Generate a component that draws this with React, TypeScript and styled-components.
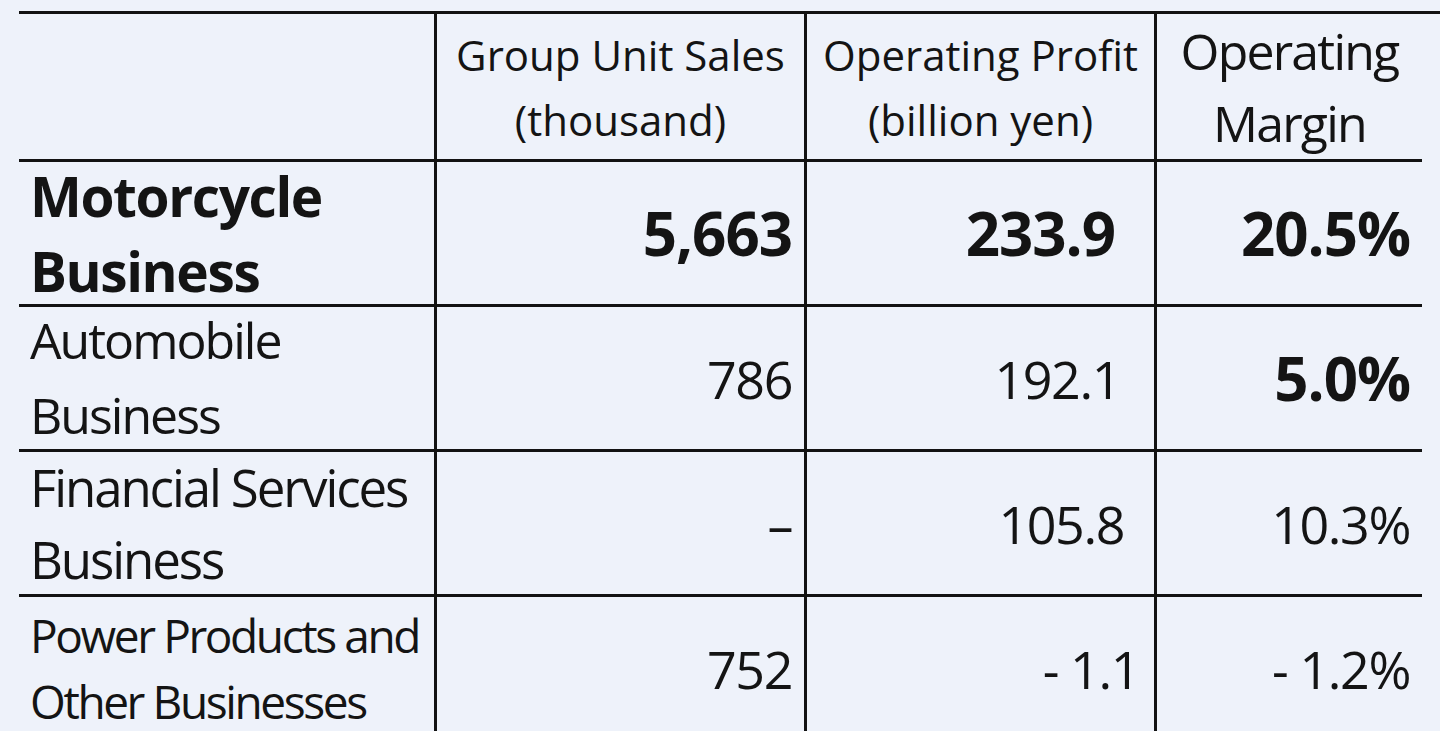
import React from "react";
import styled, { createGlobalStyle } from "styled-components";

const GlobalStyle = createGlobalStyle`
  html, body {
    margin: 0;
    padding: 0;
    background: #eef2fa;
  }
  body {
    font-family: "Open Sans", "Liberation Sans", sans-serif;
    color: #141414;
    overflow: hidden;
  }
`;

const Page = styled.div`
  width: 1440px;
  height: 731px;
  padding: 11px 0 0 19px;
  box-sizing: border-box;
  background: #eef2fa;
`;

const Table = styled.div`
  display: grid;
  grid-template-columns: 415px 370px 350px 268px;
  border-top: 3px solid #121212;
`;

const Row = styled.div<{ $h: number }>`
  display: contents;
  & > * {
    height: ${(p) => p.$h}px;
    border-bottom: 3px solid #121212;
  }
`;

const Cell = styled.div<{ $first?: boolean }>`
  display: flex;
  align-items: center;
  box-sizing: content-box;
  border-left: ${(p) => (p.$first ? "none" : "3px solid #121212")};
`;

const HeadCell = styled(Cell)`
  justify-content: center;
  text-align: center;
`;

const HeadText = styled.div<{ $size: number; $lh: number; $ls?: number }>`
  font-size: ${(p) => p.$size}px;
  line-height: ${(p) => p.$lh}px;
  letter-spacing: ${(p) => p.$ls ?? 0}px;
  white-space: nowrap;
`;

const Label = styled.div<{ $bold?: boolean; $lh: number; $size: number; $ls: number }>`
  padding-left: 11px;
  font-size: ${(p) => p.$size}px;
  font-weight: ${(p) => (p.$bold ? 700 : 400)};
  line-height: ${(p) => p.$lh}px;
  letter-spacing: ${(p) => p.$ls}px;
  white-space: nowrap;
`;

const ValueCell = styled(Cell)<{ $pad: number }>`
  justify-content: flex-end;
  padding-right: ${(p) => p.$pad}px;
`;

const Value = styled.span<{ $bold?: boolean }>`
  font-size: ${(p) => (p.$bold ? 60 : 52)}px;
  font-weight: ${(p) => (p.$bold ? 700 : 400)};
  letter-spacing: ${(p) => (p.$bold ? -1 : -1.4)}px;
  white-space: pre;
`;

type Line = {
  label: string[];
  bold?: boolean;
  size: number;
  ls: number;
  lh: number;
  values: { text: string; bold?: boolean; pad: number }[];
};

const rows: Line[] = [
  {
    label: ["Motorcycle", "Business"],
    bold: true,
    size: 55,
    ls: -1.4,
    lh: 75,
    values: [
      { text: "5,663", bold: true, pad: 12 },
      { text: "233.9", bold: true, pad: 39 },
      { text: "20.5%", bold: true, pad: 12 },
    ],
  },
  {
    label: ["Automobile", "Business"],
    size: 50,
    ls: -2,
    lh: 75,
    values: [
      { text: "786", pad: 12 },
      { text: "192.1", pad: 34 },
      { text: "5.0%", bold: true, pad: 12 },
    ],
  },
  {
    label: ["Financial Services", "Business"],
    size: 51,
    ls: -2.1,
    lh: 72,
    values: [
      { text: "–", pad: 12 },
      { text: "105.8", pad: 30 },
      { text: "10.3%", pad: 12 },
    ],
  },
  {
    label: ["Power Products and", "Other Businesses"],
    size: 46,
    ls: -2.4,
    lh: 66,
    values: [
      { text: "752", pad: 12 },
      { text: "- 1.1", pad: 15 },
      { text: "- 1.2%", pad: 12 },
    ],
  },
];

export default function App() {
  return (
    <Page>
      <GlobalStyle />
      <Table>
        <Row $h={145}>
          <Cell $first />
          <HeadCell>
            <HeadText $size={42} $lh={65}>
              Group Unit Sales
              <br />
              (thousand)
            </HeadText>
          </HeadCell>
          <HeadCell>
            <HeadText $size={42} $lh={65}>
              Operating Profit
              <br />
              (billion yen)
            </HeadText>
          </HeadCell>
          <HeadCell>
            <HeadText $size={50} $lh={72} $ls={-1.8}>
              Operating
              <br />
              Margin
            </HeadText>
          </HeadCell>
        </Row>
        {rows.map((r) => (
          <Row $h={142} key={r.label[0]}>
            <Cell $first>
              <Label $bold={r.bold} $lh={r.lh} $size={r.size} $ls={r.ls}>
                {r.label[0]}
                <br />
                {r.label[1]}
              </Label>
            </Cell>
            {r.values.map((v, i) => (
              <ValueCell $pad={v.pad} key={i}>
                <Value $bold={v.bold}>{v.text}</Value>
              </ValueCell>
            ))}
          </Row>
        ))}
      </Table>
    </Page>
  );
}
